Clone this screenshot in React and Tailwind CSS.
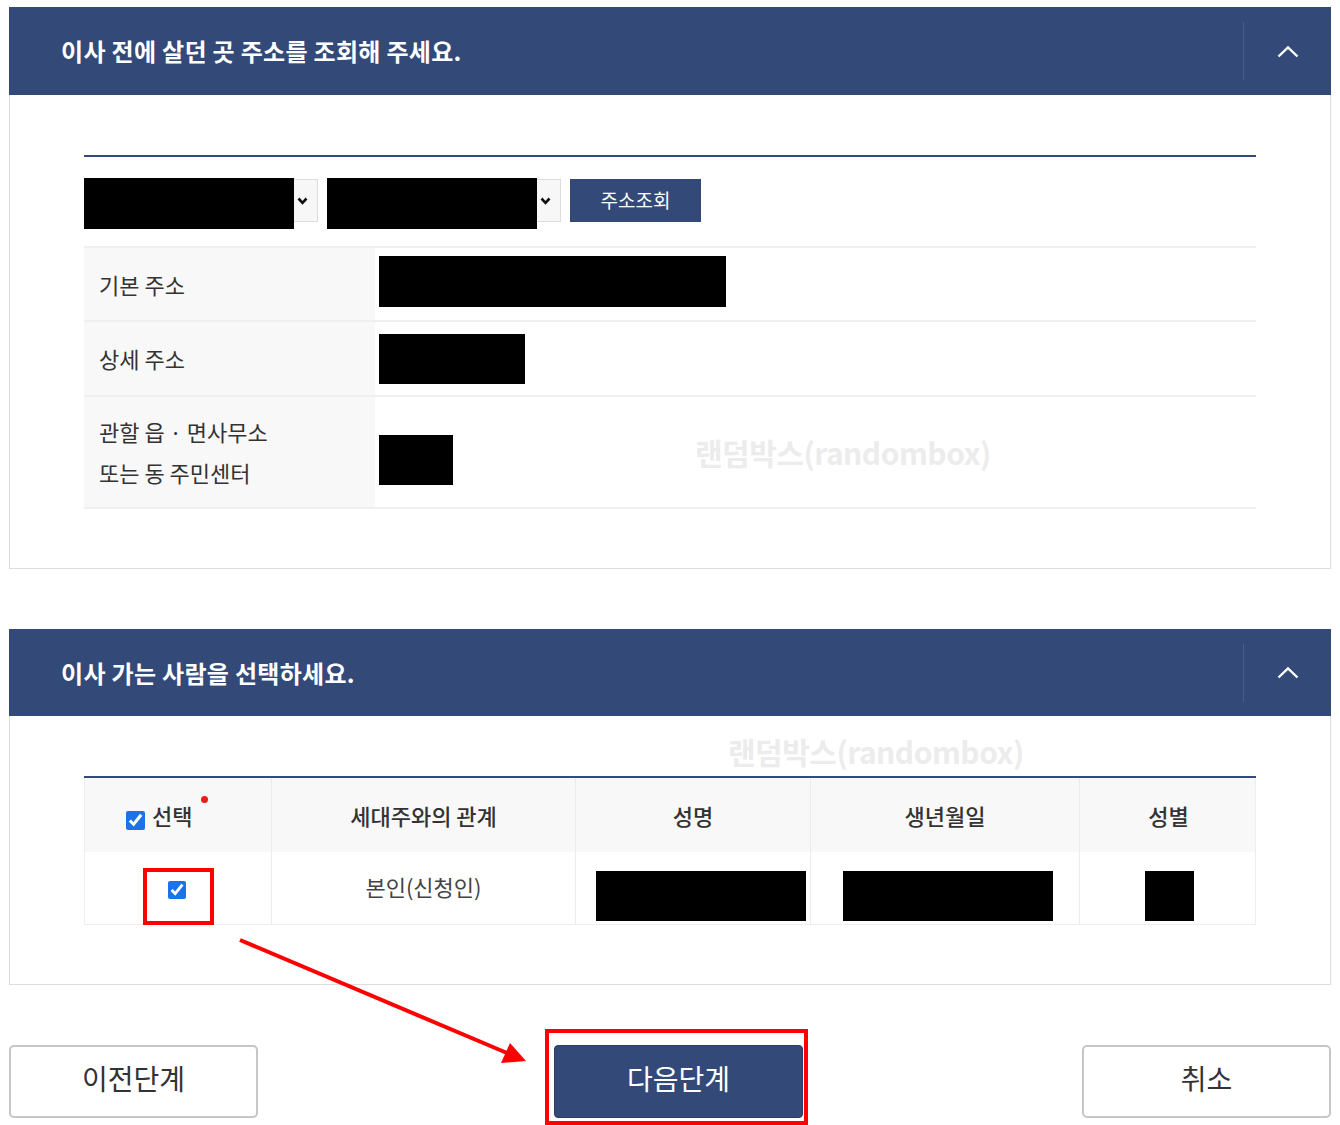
import React from 'react'

const NAVY = 'bg-[#334a79]'

const ChevronUp = () => (
  <svg width="22" height="13" viewBox="0 0 22 13" fill="none">
    <polyline points="1.5,11.5 11,2.5 20.5,11.5" stroke="#fff" strokeWidth="2.4" strokeLinejoin="miter" />
  </svg>
)

const SelectArrow = () => (
  <svg width="11" height="8" viewBox="0 0 11 8" fill="none">
    <polyline points="1.5,1.5 5.5,5.8 9.5,1.5" stroke="#111" strokeWidth="2.6" />
  </svg>
)

const PanelHeader = ({ title, height }) => (
  <div className={`${NAVY} ${height} flex items-center`}>
    <h2 className="flex-1 pl-[52px] text-white text-[24px] font-bold tracking-[0.3px] leading-none">{title}</h2>
    <div className="w-px h-[58px] bg-[#4a5e88]" />
    <div className="w-[87px] flex justify-center">
      <ChevronUp />
    </div>
  </div>
)

const FakeSelect = () => (
  <div className="relative w-[234px] h-[43px] border border-[#dcdcdc] bg-[#f7f7f7] flex items-center">
    <div className="absolute left-[-1px] top-[-2px] w-[210px] h-[51px] bg-black" />
    <div className="ml-auto mr-[9px] flex items-center">
      <SelectArrow />
    </div>
  </div>
)

const AddrRow = ({ label, height, children }) => (
  <div className={`flex border-t-2 border-[#efefef] ${height}`}>
    <div className="w-[291px] bg-[#f8f8f8] flex items-center pl-[15px] text-[22px] text-[#333]">
      {label}
    </div>
    <div className="flex-1 flex items-center pl-[4px]">{children}</div>
  </div>
)

const Watermark = ({ className }) => (
  <div className={`absolute text-[30px] font-bold text-[#ececec] tracking-[-0.5px] leading-none pointer-events-none ${className}`}>
    랜덤박스(randombox)
  </div>
)

const COLS = 'grid grid-cols-[187px_304px_235px_269px_177px]'

export default function App() {
  return (
    <div
      className="relative w-[1340px] h-[1125px] bg-white px-[9px] pt-[7px] text-[#333]"
      style={{ fontFamily: '"Noto Sans CJK KR", "Noto Sans", sans-serif' }}
    >
      {/* 이전 주소 조회 */}
      <section>
        <PanelHeader title="이사 전에 살던 곳 주소를 조회해 주세요." height="h-[88px]" />
        <div className="border-x border-b border-[#dddddd] px-[74px] pt-[60px] pb-[59px]">
          <div className="h-[2px] bg-[#344b79]" />
          <div className="mt-[22px] flex gap-[9px]">
            <FakeSelect />
            <FakeSelect />
            <button className={`${NAVY} w-[131px] h-[43px] text-white text-[19px]`}>주소조회</button>
          </div>
          <div className="mt-[24px] border-b-2 border-[#efefef]">
            <AddrRow label="기본 주소" height="h-[74px]">
              <div className="w-[347px] h-[51px] bg-black -mt-[6px]" />
            </AddrRow>
            <AddrRow label="상세 주소" height="h-[75px]">
              <div className="w-[146px] h-[50px] bg-black" />
            </AddrRow>
            <AddrRow
              label={
                <div className="leading-[41px]">
                  관할 읍 · 면사무소
                  <br />
                  또는 동 주민센터
                </div>
              }
              height="h-[112px]"
            >
              <div className="w-[74px] h-[50px] bg-black mt-[16px]" />
            </AddrRow>
          </div>
        </div>
      </section>

      {/* 이사 가는 사람 */}
      <section className="mt-[60px]">
        <PanelHeader title="이사 가는 사람을 선택하세요." height="h-[87px]" />
        <div className="border-x border-b border-[#dddddd] px-[74px] pt-[60px] pb-[59px]">
          <div className="h-[2px] bg-[#344b79]" />
          <div className="border-x border-b border-[#eeeeee]">
            <div className={`${COLS} h-[74px] bg-[#f8f8f8] text-[22px] font-medium text-[#333]`}>
              <div className="flex items-center pl-[41px] border-r border-[#ececec]">
                <input type="checkbox" defaultChecked className="w-[19px] h-[19px] accent-[#1a73e8] mt-[10px]" />
                <span className="ml-[7px]">선택</span>
                <span className="self-start mt-[18px] ml-[9px] w-[7px] h-[7px] rounded-full bg-[#ee1c1c]" />
              </div>
              <div className="flex items-center justify-center border-r border-[#ececec]">세대주와의 관계</div>
              <div className="flex items-center justify-center border-r border-[#ececec]">성명</div>
              <div className="flex items-center justify-center border-r border-[#ececec]">생년월일</div>
              <div className="flex items-center justify-center">성별</div>
            </div>
            <div className={`${COLS} h-[72px] text-[22px] text-[#444]`}>
              <div className="flex items-center justify-center border-r border-[#ececec]">
                <input type="checkbox" defaultChecked className="w-[18px] h-[18px] accent-[#1a73e8] mt-[4px] -ml-[2px]" />
              </div>
              <div className="flex items-center justify-center border-r border-[#ececec] pb-[4px]">본인(신청인)</div>
              <div className="flex items-center pl-[20px] border-r border-[#ececec]">
                <div className="w-[210px] h-[50px] bg-black mt-[16px]" />
              </div>
              <div className="flex items-center pl-[32px] border-r border-[#ececec]">
                <div className="w-[210px] h-[50px] bg-black mt-[16px]" />
              </div>
              <div className="flex items-center justify-center">
                <div className="w-[49px] h-[50px] bg-black mt-[16px] ml-[2px]" />
              </div>
            </div>
          </div>
        </div>
      </section>

      {/* 버튼 */}
      <div className="mt-[60px] flex items-center">
        <button className="w-[249px] h-[73px] pb-[7px] border-2 border-[#c6c6c6] rounded-[5px] bg-white text-[28px] text-[#333]">이전단계</button>
        <button className={`${NAVY} ml-[296px] w-[249px] h-[73px] pb-[7px] rounded-[4px] border border-[#2a3d66] text-[28px] text-white`}>다음단계</button>
        <button className="ml-auto w-[249px] h-[73px] pb-[7px] border-2 border-[#c6c6c6] rounded-[5px] bg-white text-[28px] text-[#333]">취소</button>
      </div>

      <Watermark className="left-[695px] top-[437px]" />
      <Watermark className="left-[728px] top-[736px]" />

      {/* annotations */}
      <div className="absolute left-[143px] top-[868px] w-[71px] h-[57px] border-4 border-[#ff0000]" />
      <div className="absolute left-[545px] top-[1029px] w-[263px] h-[96px] border-4 border-[#ff0000]" />
      <svg className="absolute left-0 top-0 pointer-events-none" width="1340" height="1125">
        <line x1="240" y1="940" x2="507" y2="1053" stroke="#ff0000" strokeWidth="4" />
        <polygon points="526,1061 510,1043 501,1063" fill="#ff0000" />
      </svg>
    </div>
  )
}
